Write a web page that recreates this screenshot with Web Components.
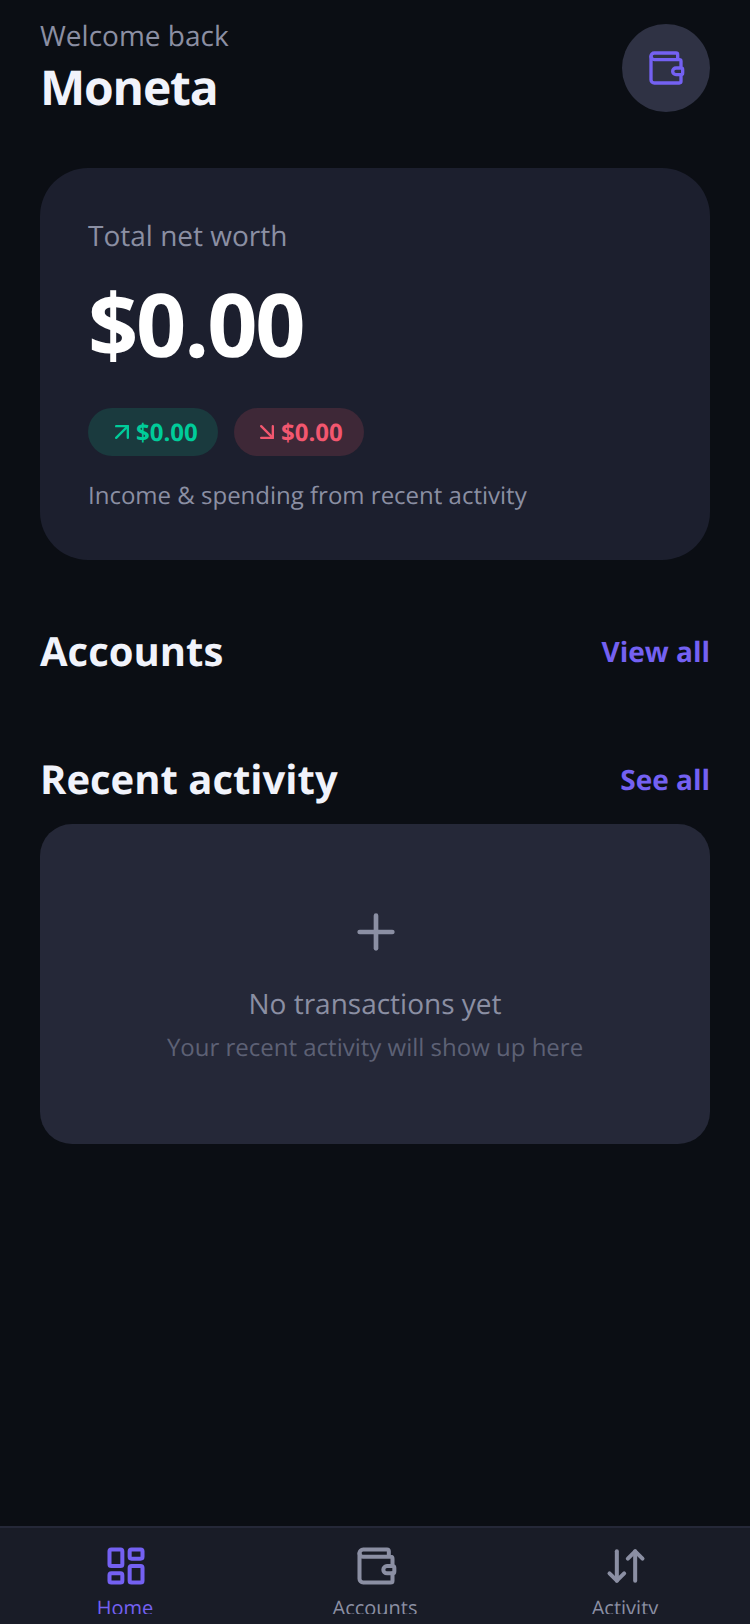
<!DOCTYPE html>
<html>
<head>
<meta charset="utf-8">
<style>
  html, body { margin: 0; height: 100%; background: #0b0e14; }
  body { font-family: "Open Sans", "Noto Sans", sans-serif; overflow: hidden; text-rendering: geometricPrecision; }
  #app { display: flex; flex-direction: column; height: 1624px; }
</style>
</head>
<body>
<div id="app">
  <home-header></home-header>
  <worth-card></worth-card>
  <section-title label="Accounts" link="View all" style="margin-top:62px"></section-title>
  <section-title label="Recent activity" link="See all" style="margin-top:72px"></section-title>
  <empty-card></empty-card>
  <tab-bar></tab-bar>
</div>
<script>
(() => {
  const icons = {
    wallet: `<path d="M19 7V4a1 1 0 0 0-1-1H5a2 2 0 0 0 0 4h15a1 1 0 0 1 1 1v4h-3a2 2 0 0 0 0 4h3a1 1 0 0 0 1-1v-2a1 1 0 0 0-1-1"/><path d="M3 5v14a2 2 0 0 0 2 2h15a1 1 0 0 0 1-1v-4"/>`,
    grid: `<rect x="3" y="3" width="7" height="9" rx="1"/><rect x="14" y="3" width="7" height="5" rx="1"/><rect x="14" y="12" width="7" height="9" rx="1"/><rect x="3" y="16" width="7" height="5" rx="1"/>`,
    swap: `<path d="m3 16 4 4 4-4"/><path d="M7 20V4"/><path d="m21 8-4-4-4 4"/><path d="M17 4v16"/>`
  }

  class HomeHeader extends HTMLElement {
    constructor() {
      super()
      this.attachShadow({ mode: 'open' }).innerHTML = `
      <style>
        :host { display: flex; justify-content: space-between; padding: 17px 40px 0; }
        .hello { font-size: 28px; line-height: 38px; color: #8b8fa3; }
        .name { font-size: 48px; line-height: 64px; margin-top: 1px; font-weight: 700; color: #f1f3fb; letter-spacing: -1.2px; }
        .avatar { width: 88px; height: 88px; margin-top: 7px; border-radius: 50%; background: #2f3244;
          display: flex; align-items: center; justify-content: center; }
        svg { width: 40px; height: 40px; fill: none; stroke: #7461f2; stroke-width: 2; stroke-linecap: round; stroke-linejoin: round; }
      </style>
      <div>
        <div class="hello">Welcome back</div>
        <div class="name">Moneta</div>
      </div>
      <div class="avatar"><svg viewBox="0 0 24 24">${icons.wallet}</svg></div>
      `
    }
  }
  customElements.define('home-header', HomeHeader)

  class WorthCard extends HTMLElement {
    constructor() {
      super()
      this.attachShadow({ mode: 'open' }).innerHTML = `
      <style>
        :host { display: block; margin: 48px 40px 0; padding: 49px 48px 0; height: 392px; box-sizing: border-box;
          border-radius: 48px; background: #1c1f2e; }
        .label { font-size: 28px; line-height: 38px; color: #8b8fa3; }
        .total { font-size: 88px; line-height: 120px; font-weight: 700; color: #fff; letter-spacing: -2.2px; margin-top: 8px; }
        .pills { display: flex; gap: 16px; margin-top: 25px; }
        .pill { display: flex; align-items: center; gap: 0; height: 48px; width: 130px; box-sizing: border-box; padding: 0 0 0 20px; border-radius: 24px;
          font-size: 24px; font-weight: 700; }
        .up { background: #1a3a3e; color: #00cc9a; }
        .down { background: #3e2837; color: #f2576f; padding-left: 19px; }
        svg { width: 28px; height: 28px; fill: none; stroke: currentColor; stroke-width: 2; stroke-linecap: round; stroke-linejoin: round; }
        .note { font-size: 24px; line-height: 34px; color: #8b8fa3; margin-top: 23px; white-space: nowrap; }
      </style>
      <div class="label">Total net worth</div>
      <div class="total">$0.00</div>
      <div class="pills">
        <div class="pill up"><svg viewBox="0 0 24 24"><path d="M7 7h10v10"/><path d="M7 17 17 7"/></svg>$0.00</div>
        <div class="pill down"><svg viewBox="0 0 24 24"><path d="m7 7 10 10"/><path d="M17 7v10H7"/></svg>$0.00</div>
      </div>
      <div class="note">Income &amp; spending from recent activity</div>
      `
    }
  }
  customElements.define('worth-card', WorthCard)

  class SectionTitle extends HTMLElement {
    constructor() {
      super()
      this.attachShadow({ mode: 'open' }).innerHTML = `
      <style>
        :host { display: flex; justify-content: space-between; align-items: center; padding: 0 40px; height: 56px; }
        .title { font-size: 40px; font-weight: 700; color: #f1f3fb; }
        .link { font-size: 28px; font-weight: 700; color: #7461f2; margin-top: 4px; }
      </style>
      <div class="title">${this.getAttribute('label')}</div>
      <div class="link">${this.getAttribute('link')}</div>
      `
    }
  }
  customElements.define('section-title', SectionTitle)

  class EmptyCard extends HTMLElement {
    constructor() {
      super()
      this.attachShadow({ mode: 'open' }).innerHTML = `
      <style>
        :host { display: flex; flex-direction: column; align-items: center; margin: 18px 40px 0; height: 320px; box-sizing: border-box;
          padding-top: 80px; border-radius: 32px; background: #252838; }
        svg { width: 56px; height: 56px; margin-left: 2px; fill: none; stroke: #8b8fa3; stroke-width: 2; stroke-linecap: round; }
        .main { font-size: 28px; line-height: 38px; color: #8b8fa3; margin-top: 25px; }
        .sub { font-size: 24px; line-height: 34px; color: #5d6175; margin-top: 8px; }
      </style>
      <svg viewBox="0 0 24 24"><path d="M5 12h14"/><path d="M12 5v14"/></svg>
      <div class="main">No transactions yet</div>
      <div class="sub">Your recent activity will show up here</div>
      `
    }
  }
  customElements.define('empty-card', EmptyCard)

  class TabItem extends HTMLElement {
    constructor() {
      super()
      const on = this.hasAttribute('active')
      this.attachShadow({ mode: 'open' }).innerHTML = `
      <style>
        :host { flex: 1; display: flex; flex-direction: column; align-items: center; color: ${on ? '#7461f2' : '#8b8fa3'}; }
        svg { width: 44px; height: 44px; flex: none; margin-left: 2px; fill: none; stroke: currentColor; stroke-width: 2.2; stroke-linecap: round; stroke-linejoin: round; }
        .label { font-size: 20px; line-height: 28px; margin-top: 6px; }
      </style>
      <svg viewBox="0 0 24 24">${icons[this.getAttribute('icon')]}</svg>
      <div class="label"><slot></slot></div>
      `
    }
  }
  customElements.define('tab-item', TabItem)

  class TabBar extends HTMLElement {
    constructor() {
      super()
      this.attachShadow({ mode: 'open' }).innerHTML = `
      <style>
        :host { display: block; margin-top: auto; height: 98px; box-sizing: border-box; border-top: 2px solid #252838;
          background: #191c27; overflow: hidden; }
        .row { display: flex; box-sizing: border-box; padding-top: 16px; height: 86px; overflow: hidden; }
      </style>
      <div class="row">
        <tab-item icon="grid" active>Home</tab-item>
        <tab-item icon="wallet">Accounts</tab-item>
        <tab-item icon="swap">Activity</tab-item>
      </div>
      `
    }
  }
  customElements.define('tab-bar', TabBar)
})()
</script>
</body>
</html>
